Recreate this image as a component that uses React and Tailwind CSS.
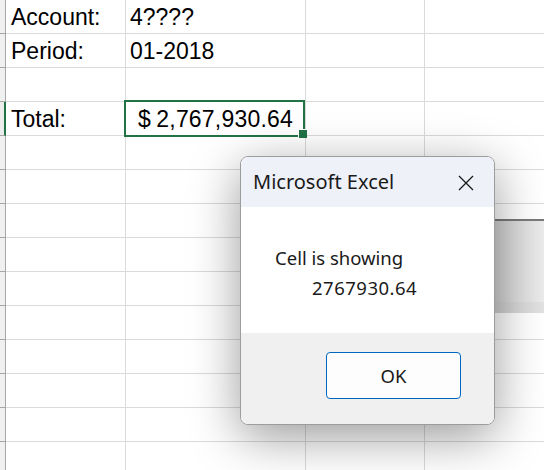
import React from "react";

const rows = [
  { a: "Account:", b: "4????" },
  { a: "Period:", b: "01-2018" },
  {},
  { a: "Total:", money: true, sel: true },
  {}, {}, {}, {}, {}, {}, {}, {}, {}, {},
];

const cellText = "pt-[6px] leading-[23px] text-[23px] text-black whitespace-nowrap";

function Row({ r }) {
  return (
    <div className="flex h-[34px]">
      <div
        className={
          r.sel
            ? "w-[6px] shrink-0 h-full bg-[#ececec] border-b border-b-[#a6a6a6] border-r-2 border-r-[#217346]"
            : "w-[6px] shrink-0 h-full bg-[#f0f0f0] border-b border-b-[#a6a6a6] border-r border-r-[#a6a6a6]"
        }
      />
      <div className={"w-[120px] shrink-0 h-full border-b border-r border-[#dadada] pl-[5px] " + cellText}>
        {r.a}
      </div>
      {r.money ? (
        <div className={"w-[180px] shrink-0 h-full border-b border-r border-[#dadada] pl-[12px] pr-[12px] flex justify-between " + cellText}>
          <span>$</span>
          <span className="tracking-[0.2px]">2,767,930.64</span>
        </div>
      ) : (
        <div className={"w-[180px] shrink-0 h-full border-b border-r border-[#dadada] pl-[4px] " + cellText}>
          {r.b}
        </div>
      )}
      <div className="w-[119px] shrink-0 h-full border-b border-r border-[#dadada]" />
      <div className="flex-1 h-full border-b border-[#dadada]" />
    </div>
  );
}

export default function App() {
  return (
    <div
      className="relative w-[544px] h-[470px] overflow-hidden bg-white"
      style={{ fontFamily: '"Liberation Sans", Arial, sans-serif' }}
    >
      <div className="flex flex-col">
        {rows.map((r, i) => (
          <Row key={i} r={r} />
        ))}
      </div>

      {/* selection outline */}
      <div className="absolute left-[124px] top-[100px] w-[181px] h-[37px] border-2 border-[#217346]" />
      <div className="absolute left-[298px] top-[129px] w-[9px] h-[9px] bg-white" />
      <div className="absolute left-[299px] top-[130px] w-[8px] h-[8px] bg-[#217346]" />

      {/* gray panel behind dialog */}
      <div className="absolute left-[494px] top-[219px] w-[50px] h-[94px] border-t-2 border-[#7a7a7a] bg-gradient-to-r from-[#d2d2d2] to-[#ebebeb]">
        <div className="absolute left-0 right-0 bottom-0 h-[11px] bg-gradient-to-r from-[#cfcfcf] to-[#e2e2e2]" />
      </div>

      {/* dialog */}
      <div
        className="absolute left-[240px] top-[156px] w-[255px] h-[269px] rounded-[8px] border border-[#9c9c9c] bg-white overflow-hidden flex flex-col shadow-[0_12px_50px_rgba(0,0,0,0.4)]"
        style={{ fontFamily: '"Noto Sans", "Open Sans", sans-serif' }}
      >
        <div className="h-[50px] shrink-0 bg-[#eff1f8] flex items-center justify-between pl-[12px] pr-[20px]">
          <span className="text-[20px] leading-[28px] text-[#1a1a1a]">Microsoft Excel</span>
          <svg width="16" height="16" viewBox="0 0 16 16" className="mt-[1px]">
            <path d="M1 1 L15 15 M15 1 L1 15" stroke="#1a1a1a" strokeWidth="1.3" fill="none" />
          </svg>
        </div>
        <div className="h-[126px] shrink-0 bg-white pt-[36px] pl-[34px] text-[18.5px] leading-[30px] text-[#1a1a1a]">
          <div>Cell is showing</div>
          <div className="ml-[37px] tracking-[0.5px]">2767930.64</div>
        </div>
        <div className="flex-1 bg-[#f0f0f0] flex justify-end items-start pt-[19px] pr-[33px]">
          <div className="w-[135px] h-[47px] rounded-[4px] border-[1.5px] border-[#0067c0] bg-[#fdfdfd] flex items-center justify-center text-[18.5px] text-[#1a1a1a]">
            OK
          </div>
        </div>
      </div>
    </div>
  );
}
